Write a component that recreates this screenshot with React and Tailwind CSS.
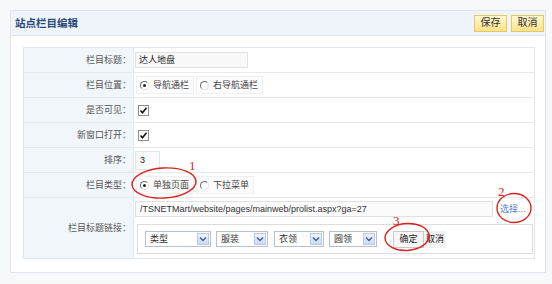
import React from 'react';

const Row = ({ label, children, last }) => (
  <div className={last ? 'flex h-[60px]' : 'flex h-[25px] border-b border-[#e3e9ef]'}>
    <div className="w-[110px] shrink-0 bg-[#f1f6fb] border-r border-[#e3e9ef] flex items-center justify-end pr-[2px] text-[#555]">
      {label}
    </div>
    <div className="flex-1 flex items-center pl-[1px]">{children}</div>
  </div>
);

const Radio = ({ checked, label }) => (
  <span className="flex items-center h-[18px] pl-[3px] pr-[4px] border border-[#f0f0f0] bg-[#fcfcfc]">
    <span className="relative w-[9px] h-[9px] rounded-full border border-t-[#6b6b6b] border-l-[#6b6b6b] border-r-[#e2e2e2] border-b-[#e2e2e2] bg-white">
      {checked && <span className="absolute left-[2px] top-[2px] w-[3px] h-[3px] rounded-full bg-[#222]" />}
    </span>
    <span className="ml-[4px] text-[#444]">{label}</span>
  </span>
);

const Check = () => (
  <span className="flex items-center justify-center w-[11px] h-[11px] ml-[3px] border border-[#8f8f8f] bg-white">
    <svg width="9" height="9" viewBox="0 0 9 9">
      <path d="M1.5 4.5 L3.5 6.8 L7.5 1.8" fill="none" stroke="#111" strokeWidth="1.6" />
    </svg>
  </span>
);

const Select = ({ label, w }) => (
  <div className={`flex items-center justify-between h-[16px] border border-[#b9c0c7] bg-white pl-[4px] ${w}`}>
    <span className="text-[#333]">{label}</span>
    <span className="flex items-center justify-center w-[12px] h-[12px] mr-[1px] border border-[#b7c9e6] bg-gradient-to-b from-[#eef3fc] to-[#c9d9f3]">
      <svg width="8" height="6" viewBox="0 0 8 6">
        <path d="M1 1.5 L4 4.5 L7 1.5" fill="none" stroke="#4a5f8a" strokeWidth="1.5" />
      </svg>
    </span>
  </div>
);

const YellowBtn = ({ children }) => (
  <button className="h-[17px] w-[33px] border border-[#e2c968] bg-gradient-to-b from-[#fff8cc] to-[#fbe28a] text-[10px] text-[#333] leading-none">
    {children}
  </button>
);

export default function App() {
  return (
    <div className="relative w-[552px] h-[284px] bg-[#f6f9fb] pt-[10px] pl-[10px] text-[9px] leading-none font-['Liberation_Sans','Noto_Sans_CJK_SC',sans-serif]">
      <div className="w-[536px] border border-[#dde6ee] bg-white">
        <div className="flex items-center justify-between h-[25px] bg-[#eef4fa] border-b border-[#dde7f0] pl-[4px] pr-[1px]">
          <span className="text-[10.5px] font-bold text-[#2a4a7c]">站点栏目编辑</span>
          <div className="flex gap-[4px]">
            <YellowBtn>保存</YellowBtn>
            <YellowBtn>取消</YellowBtn>
          </div>
        </div>

        <div className="pt-[11px] pl-[12px] pr-[10px] pb-[13px]">
          <div className="border border-[#e0e6ec]">
            <Row label="栏目标题：">
              <div className="flex items-center w-[113px] h-[16px] border border-[#e2e2e2] bg-[#f8f8f8] pl-[3px] text-[#222]">
                达人地盘
              </div>
            </Row>
            <Row label="栏目位置：">
              <div className="flex gap-[2px] ml-[1px]">
                <Radio checked label="导航通栏" />
                <Radio label="右导航通栏" />
              </div>
            </Row>
            <Row label="是否可见：">
              <Check />
            </Row>
            <Row label="新窗口打开：">
              <Check />
            </Row>
            <Row label="排序：">
              <div className="flex items-center w-[25px] h-[19px] border border-[#e6e6e6] bg-[#fafafa] pl-[4px] text-[#222]">
                3
              </div>
            </Row>
            <Row label="栏目类型：">
              <div className="flex gap-[2px] ml-[1px]">
                <Radio checked label="单独页面" />
                <Radio label="下拉菜单" />
              </div>
            </Row>
            <Row label="栏目标题链接：" last>
              <div className="flex flex-col self-start">
                <div className="flex items-center mt-[3px]">
                  <div className="flex items-center w-[358px] h-[16px] border border-[#e0e0e0] bg-[#fbfbfb] pl-[4px] text-[#333]">
                    /TSNETMart/website/pages/mainweb/prolist.aspx?ga=27
                  </div>
                  <span className="ml-[7px] text-[#4a7fc4]">选择...</span>
                </div>
                <div className="flex items-center w-[396px] h-[30px] mt-[7px] ml-[2px] border border-[#dcdcdc] pl-[7px]">
                  <Select label="类型" w="w-[66px]" />
                  <div className="w-[5px]" />
                  <Select label="服装" w="w-[52px]" />
                  <div className="w-[6px]" />
                  <Select label="衣领" w="w-[50px]" />
                  <div className="w-[5px]" />
                  <Select label="圆领" w="w-[48px]" />
                  <button className="ml-[16px] h-[17px] w-[31px] border border-[#c8c8c8] bg-[#f7f7f7] text-[#222] leading-none">
                    确定
                  </button>
                  <button className="h-[17px] w-[22px] bg-[#f3f3f3] text-[#222] leading-none">取消</button>
                </div>
              </div>
            </Row>
          </div>
        </div>
      </div>

      <svg className="absolute left-0 top-0 pointer-events-none" width="552" height="284" viewBox="0 0 552 284">
        <ellipse cx="164" cy="183" rx="32" ry="15" fill="none" stroke="#d8231f" strokeWidth="1.4" transform="rotate(-3 164 183)" />
        <ellipse cx="514" cy="208" rx="17" ry="14.5" fill="none" stroke="#d8231f" strokeWidth="1.4" />
        <ellipse cx="407" cy="237" rx="22" ry="13.5" fill="none" stroke="#d8231f" strokeWidth="1.4" transform="rotate(-4 407 237)" />
        <text x="189" y="170" fill="#d8231f" fontSize="13" fontFamily="Liberation Serif, serif">1</text>
        <text x="498" y="196" fill="#d8231f" fontSize="13" fontFamily="Liberation Serif, serif">2</text>
        <text x="393" y="225" fill="#d8231f" fontSize="13" fontFamily="Liberation Serif, serif">3</text>
      </svg>
    </div>
  );
}
